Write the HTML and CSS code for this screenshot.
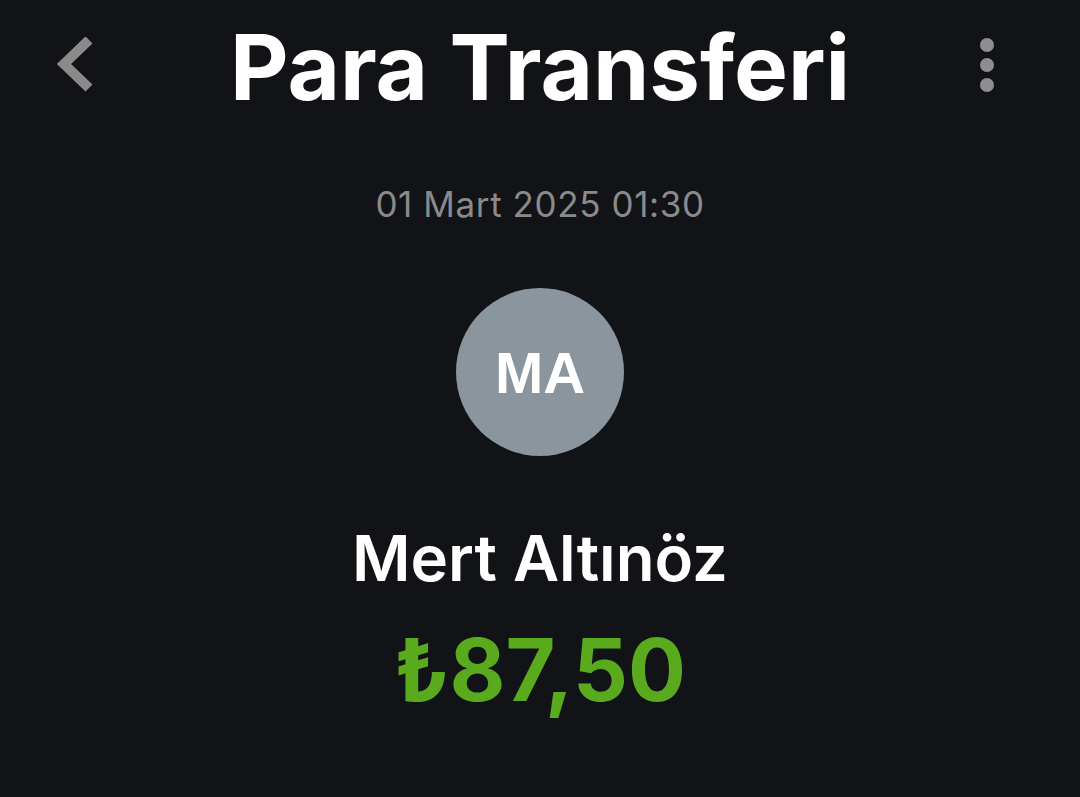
FILE: index.html
```html
<!DOCTYPE html>
<html lang="tr">
<head>
    <meta charset="UTF-8">
    <meta name="viewport" content="width=device-width, initial-scale=1.0">
    <title>Para Transferi</title>
    <link rel="stylesheet" href="styles.css">
</head>
<body>
    <div class="screen">
        <div class="header">
            <button class="back">
                <svg width="50" height="58" viewBox="0 0 50 58">
                    <path d="M43 3 L18 27 L43 51" fill="none" stroke="#8a8a8a" stroke-width="10"/>
                </svg>
            </button>
            <h1>Para Transferi</h1>
            <button class="menu">
                <span></span><span></span><span></span>
            </button>
        </div>
        <div class="details">
            <p class="date">01 Mart 2025 01:30</p>
            <div class="avatar">MA</div>
            <h2 class="name">Mert Altınöz</h2>
            <p class="amount">₺87,50</p>
        </div>
    </div>
</body>
</html>
```
FILE: styles.css
```css
body {
    margin: 0;
    background-color: #121317;
    color: #fff;
    font-family: Inter, "Noto Sans", sans-serif;
}
.screen {
    width: 1080px;
    height: 797px;
}
.header {
    display: grid;
    grid-template-columns: 1fr auto 1fr;
    align-items: center;
    height: 134px;
    padding: 0 46px;
}
.header h1 {
    margin: 0;
    font-size: 90.5px;
    font-weight: 700;
}
button {
    background: none;
    border: none;
    padding: 0;
    cursor: pointer;
}
.back {
    display: flex;
    justify-self: start;
    margin-top: -2px;
}
.menu {
    display: flex;
    flex-direction: column;
    gap: 6px;
    justify-self: end;
    margin: -4px 40px 0 0;
}
.menu span {
    width: 14px;
    height: 14px;
    border-radius: 50%;
    background-color: #8e8e8e;
}
.details {
    display: flex;
    flex-direction: column;
    align-items: center;
}
.date {
    margin: 49px 0 0;
    font-size: 35px;
    letter-spacing: 0.6px;
    color: #8a8a8c;
}
.avatar {
    display: flex;
    align-items: center;
    justify-content: center;
    width: 168px;
    height: 168px;
    margin-top: 63px;
    border-radius: 50%;
    background-color: #8a959e;
    font-family: "Liberation Sans", Arial, sans-serif;
    font-weight: 700;
    font-size: 58px;
}
.name {
    margin: 63px 0 0;
    font-size: 63.5px;
    font-weight: 600;
}
.amount {
    margin: 22px 0 0;
    font-size: 86px;
    font-weight: 700;
    color: #5aaa1e;
}
```
